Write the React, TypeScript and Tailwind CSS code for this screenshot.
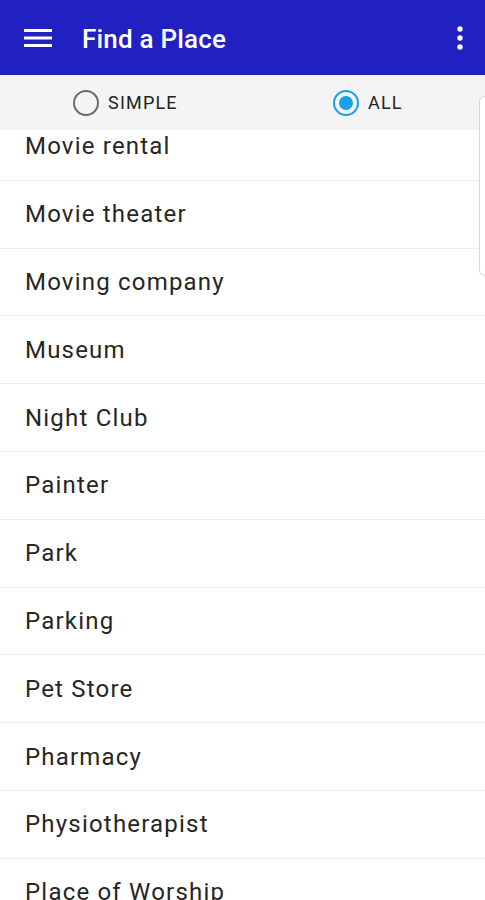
import React from 'react';

const places = [
  'Movie rental',
  'Movie theater',
  'Moving company',
  'Museum',
  'Night Club',
  'Painter',
  'Park',
  'Parking',
  'Pet Store',
  'Pharmacy',
  'Physiotherapist',
  'Place of Worship',
];

function Radio({ checked, label }: { checked: boolean; label: string }) {
  return (
    <div className="flex items-center gap-[9px]">
      {checked ? (
        <span className="flex h-[26px] w-[26px] items-center justify-center rounded-full border-[2.5px] border-[#1aa1e8]">
          <span className="h-[14px] w-[14px] rounded-full bg-[#1aa1e8]" />
        </span>
      ) : (
        <span className="h-[26px] w-[26px] rounded-full border-[2.5px] border-[#6b6b6b]" />
      )}
      <span className="text-[18px] tracking-[1.2px] text-[#222]">{label}</span>
    </div>
  );
}

export default function App() {
  return (
    <div className="relative flex h-[900px] w-[485px] flex-col overflow-hidden bg-white font-['Roboto',sans-serif]">
      {/* Toolbar */}
      <header className="flex h-[75px] shrink-0 items-center bg-[#2121c2] pl-[24px] pr-[22px]">
        <svg width="28" height="18" viewBox="0 0 28 18" className="shrink-0">
          <rect x="0" y="0" width="28" height="3" fill="#fff" />
          <rect x="0" y="7.5" width="28" height="3" fill="#fff" />
          <rect x="0" y="15" width="28" height="3" fill="#fff" />
        </svg>
        <h1 className="ml-[30px] mt-[3px] flex-1 text-[26px] font-medium tracking-[0.2px] text-white">Find a Place</h1>
        <svg width="6" height="24" viewBox="0 0 6 24">
          <circle cx="3" cy="3" r="2.7" fill="#fff" />
          <circle cx="3" cy="12" r="2.7" fill="#fff" />
          <circle cx="3" cy="21" r="2.7" fill="#fff" />
        </svg>
      </header>

      {/* Mode selector */}
      <div className="flex h-[55px] shrink-0 items-center bg-[#f4f4f4] pl-[73px]">
        <div className="w-[260px]">
          <Radio checked={false} label="SIMPLE" />
        </div>
        <Radio checked label="ALL" />
      </div>

      {/* List */}
      <div className="flex-1 overflow-hidden">
        <ul className="-mt-[17px]">
          {places.map((p) => (
            <li
              key={p}
              className="flex h-[67.8px] items-center border-b border-[#ececec] pl-[25px] text-[24px] tracking-[1.2px] text-[#262626]"
            >
              {p}
            </li>
          ))}
        </ul>
      </div>

      {/* Fast-scroll thumb */}
      <div className="absolute right-[-6px] top-[96px] h-[180px] w-[12px] rounded-[6px] border border-[#d6d6d6] bg-white" />
    </div>
  );
}
